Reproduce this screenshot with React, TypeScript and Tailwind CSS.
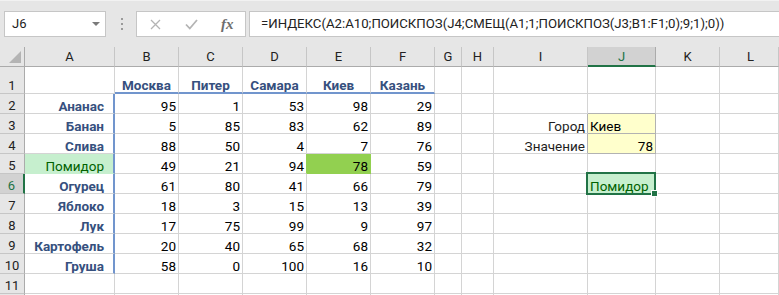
import React from 'react';

const letters = ['A', 'B', 'C', 'D', 'E', 'F', 'G', 'H', 'I', 'J', 'K', 'L'];
const labels = ['Ананас', 'Банан', 'Слива', 'Помидор', 'Огурец', 'Яблоко', 'Лук', 'Картофель', 'Груша'];
const nums = [
  [95, 1, 53, 98, 29],
  [5, 85, 83, 62, 89],
  [88, 50, 4, 7, 76],
  [49, 21, 94, 78, 59],
  [61, 80, 41, 66, 79],
  [18, 3, 15, 13, 39],
  [17, 75, 99, 9, 97],
  [20, 40, 65, 68, 32],
  [58, 0, 100, 16, 10],
];
const cities = ['Москва', 'Питер', 'Самара', 'Киев', 'Казань'];

function cellProps(r: number, c: number) {
  let text = '';
  let align = 'justify-end pr-[2px]';
  let color = 'text-black';
  let weight = 'font-normal';
  let bg = 'bg-white';
  let rb = 'border-r border-r-[#d4d4d4]';
  let bb = 'border-b border-b-[#d4d4d4]';
  let overlay: React.ReactNode = null;
  let overflow = 'overflow-hidden';

  if (r === 1 && c >= 1 && c <= 5) {
    text = cities[c - 1];
    align = 'justify-center';
    color = 'text-[#36507e]';
    weight = 'font-bold';
    bb = 'border-b-2 border-b-[#7195cd]';
  }
  if (r >= 2 && r <= 10) {
    if (c === 0) {
      text = labels[r - 2];
      align = 'justify-end pr-[9px]';
      color = 'text-[#36507e]';
      weight = 'font-bold';
      rb = 'border-r-2 border-r-[#7195cd]';
      if (r === 5) {
        color = 'text-[#006100]';
        weight = 'font-normal';
        bg = 'bg-[#c6efce]';
        bb = 'border-b border-b-[#c6efce]';
      }
    } else if (c >= 1 && c <= 5) {
      text = String(nums[r - 2][c - 1]);
    }
  }
  if (r === 5 && c === 4) {
    bg = 'bg-[#92d050]';
    rb = 'border-r border-r-[#92d050]';
    bb = 'border-b border-b-[#92d050]';
  }
  if (r === 5 && c === 3) {
    rb = 'border-r border-r-[#92d050]';
  }
  if (c === 8 && (r === 3 || r === 4)) {
    text = r === 3 ? 'Город' : 'Значение';
    color = 'text-[#1e1e1e]';
    rb = 'border-r border-r-[#b2b2b2]';
  }
  if (c === 9 && r === 2) {
    bb = 'border-b border-b-[#b2b2b2]';
  }
  if (c === 9 && (r === 3 || r === 4)) {
    bg = 'bg-[#ffffcc]';
    rb = 'border-r border-r-[#b2b2b2]';
    bb = 'border-b border-b-[#b2b2b2]';
    if (r === 3) {
      text = 'Киев';
      align = 'justify-start pl-[2px]';
    } else {
      text = '78';
    }
  }
  if (c === 9 && r === 6) {
    text = 'Помидор';
    align = 'justify-start pl-[2px]';
    color = 'text-[#006100]';
    bg = 'bg-[#c6efce]';
    overflow = 'overflow-visible';
    overlay = (
      <>
        <div className="absolute -top-[2px] -left-[2px] -right-[1px] -bottom-[2px] z-10 border-2 border-[#217346] pointer-events-none" />
        <div className="absolute -right-[3px] -bottom-[4px] z-20 h-[7px] w-[7px] border border-white bg-[#217346]" />
      </>
    );
  }
  return { text, align, color, weight, bg, rb, bb, overlay, overflow };
}

function XIcon() {
  return (
    <svg width="11" height="11" viewBox="0 0 11 11">
      <path d="M1 1 L10 10 M10 1 L1 10" stroke="#b4b4b4" strokeWidth="1.3" fill="none" />
    </svg>
  );
}

function CheckIcon() {
  return (
    <svg width="13" height="11" viewBox="0 0 13 11">
      <path d="M1 5.5 L4.8 9.5 L12 1" stroke="#b4b4b4" strokeWidth="1.8" fill="none" />
    </svg>
  );
}

export default function App() {
  const rows = Array.from({ length: 12 }, (_, i) => i + 1);
  return (
    <div className="w-[779px] h-[295px] overflow-hidden bg-white font-[Roboto,sans-serif]">
      <div className="h-[47px] bg-[#e6e6e6] border-t border-t-[#f2f2f2] flex items-start pt-[10px] pl-[4px]">
        <div className="w-[102px] h-[26px] shrink-0 border border-[#c6c6c6] bg-white flex items-center justify-between pl-[7px] pr-[5px] text-[13px] text-[#222]">
          <span>J6</span>
          <svg width="8" height="4" viewBox="0 0 8 4">
            <path d="M0 0 L8 0 L4 4 Z" fill="#7a7a7a" />
          </svg>
        </div>
        <div className="ml-[15px] mt-[7px] flex flex-col gap-[3px] shrink-0">
          <div className="w-[2px] h-[2px] bg-[#9a9a9a]" />
          <div className="w-[2px] h-[2px] bg-[#9a9a9a]" />
          <div className="w-[2px] h-[2px] bg-[#9a9a9a]" />
        </div>
        <div className="ml-[13px] w-[110px] h-[26px] shrink-0 border border-[#c6c6c6] bg-white flex items-center">
          <div className="ml-[13px]"><XIcon /></div>
          <div className="ml-[24px]"><CheckIcon /></div>
          <div className="ml-[23px] font-['Liberation_Serif',serif] italic font-bold text-[15px] text-[#6e6e6e] leading-none">fx</div>
        </div>
        <div className="ml-[3px] h-[26px] flex-1 -mr-[2px] border border-[#c6c6c6] bg-white flex items-center pl-[11px] text-[13.2px] text-[#222] whitespace-nowrap overflow-hidden">
          =ИНДЕКС(A2:A10;ПОИСКПОЗ(J4;СМЕЩ(A1;1;ПОИСКПОЗ(J3;B1:F1;0);9;1);0))
        </div>
      </div>

      <div className="grid grid-cols-[25px_90px_64px_64px_64px_64px_64px_27px_32px_94px_68px_64px_1fr] grid-rows-[20px_27px_repeat(11,20px)]">
        <div className="relative bg-[#e6e6e6] border-r border-r-[#ababab] border-b border-b-[#ababab]">
          <svg className="absolute left-[9px] top-[4px]" width="12" height="12" viewBox="0 0 12 12">
            <path d="M12 0 L12 12 L0 12 Z" fill="#b4b4b4" />
          </svg>
        </div>
        {letters.map((l, i) =>
          l === 'J' ? (
            <div
              key={l}
              className="flex items-center justify-center bg-[#d2d2d2] border-r border-r-[#ababab] border-b-2 border-b-[#217346] text-[13px] text-[#217346] leading-[19px]"
            >
              {l}
            </div>
          ) : (
            <div
              key={l}
              className={`flex items-center justify-center bg-[#e6e6e6] border-r border-r-[#c6c6c6] border-b border-b-[#ababab] text-[13px] text-[#222] leading-[19px] ${i === 11 ? 'justify-start pl-[27px]' : ''}`}
            >
              {l}
            </div>
          )
        )}
        {rows.map((r) => (
          <React.Fragment key={r}>
            {r === 6 ? (
              <div className="flex items-end justify-center bg-[#d2d2d2] border-r-2 border-r-[#217346] border-b border-b-[#c6c6c6] text-[13px] text-[#217346] leading-[14px]">
                {r}
              </div>
            ) : (
              <div className="flex items-end justify-center bg-[#e6e6e6] border-r border-r-[#ababab] border-b border-b-[#c6c6c6] text-[13px] text-[#222] leading-[14px]">
                {r <= 11 ? r : ''}
              </div>
            )}
            {letters.map((_, c) => {
              const p = cellProps(r, c);
              return (
                <div
                  key={c}
                  className={`relative flex items-end whitespace-nowrap text-[13.5px] leading-[14px] ${p.overflow} ${p.rb} ${p.bb} ${p.bg} ${p.align} ${p.color} ${p.weight}`}
                >
                  {p.text}
                  {p.overlay}
                </div>
              );
            })}
          </React.Fragment>
        ))}
      </div>
    </div>
  );
}
